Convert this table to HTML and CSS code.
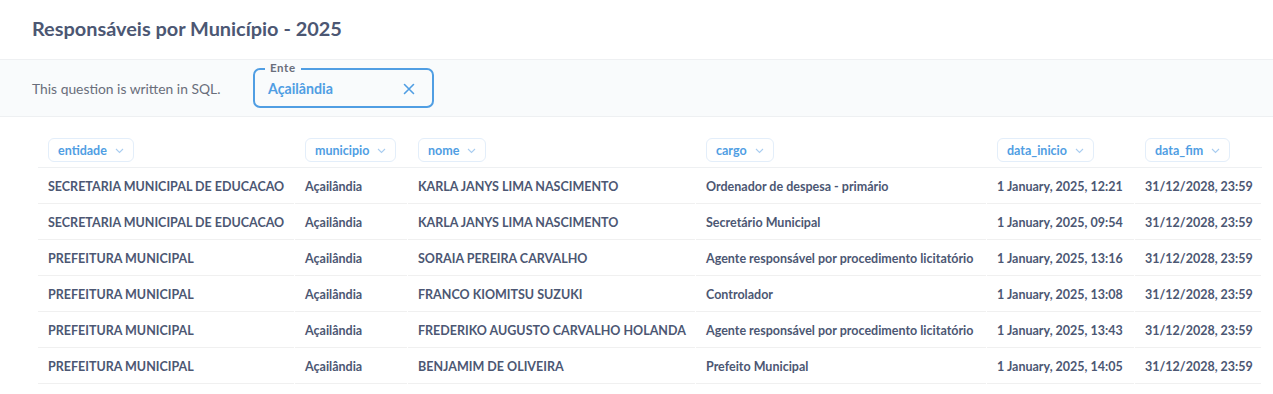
FILE: index.html
```html
<!DOCTYPE html>
<html lang="pt">
<head>
<meta charset="utf-8">
<link rel="stylesheet" href="styles.css">
</head>
<body>
<div class="page">
  <header class="title-bar">
    <h1 class="title">Responsáveis por Município - 2025</h1>
  </header>
  <div class="filter-bar">
    <span class="sql-note">This question is written in SQL.</span>
    <div class="param">
      <span class="param-label">Ente</span>
      <span class="param-value">Açailândia</span>
      <svg class="param-clear" width="12" height="12" viewBox="0 0 12 12"><path d="M1.5 1.5 L10.5 10.5 M10.5 1.5 L1.5 10.5" stroke="#509ee3" stroke-width="1.6" stroke-linecap="round" fill="none"/></svg>
    </div>
  </div>
  <div class="table">
    <div class="row head">
      <div class="cell"><span class="pill">entidade<svg class="chev" width="9" height="6" viewBox="0 0 9 6"><path d="M1 1 L4.5 4.5 L8 1" stroke="#a9cdf0" stroke-width="1.1" fill="none"/></svg></span></div>
      <div class="cell"><span class="pill">municipio<svg class="chev" width="9" height="6" viewBox="0 0 9 6"><path d="M1 1 L4.5 4.5 L8 1" stroke="#a9cdf0" stroke-width="1.1" fill="none"/></svg></span></div>
      <div class="cell"><span class="pill">nome<svg class="chev" width="9" height="6" viewBox="0 0 9 6"><path d="M1 1 L4.5 4.5 L8 1" stroke="#a9cdf0" stroke-width="1.1" fill="none"/></svg></span></div>
      <div class="cell"><span class="pill">cargo<svg class="chev" width="9" height="6" viewBox="0 0 9 6"><path d="M1 1 L4.5 4.5 L8 1" stroke="#a9cdf0" stroke-width="1.1" fill="none"/></svg></span></div>
      <div class="cell"><span class="pill">data_inicio<svg class="chev" width="9" height="6" viewBox="0 0 9 6"><path d="M1 1 L4.5 4.5 L8 1" stroke="#a9cdf0" stroke-width="1.1" fill="none"/></svg></span></div>
      <div class="cell"><span class="pill">data_fim<svg class="chev" width="9" height="6" viewBox="0 0 9 6"><path d="M1 1 L4.5 4.5 L8 1" stroke="#a9cdf0" stroke-width="1.1" fill="none"/></svg></span></div>
    </div>
    <div class="row">
      <div class="cell">SECRETARIA MUNICIPAL DE EDUCACAO</div>
      <div class="cell">Açailândia</div>
      <div class="cell">KARLA JANYS LIMA NASCIMENTO</div>
      <div class="cell">Ordenador de despesa - primário</div>
      <div class="cell">1 January, 2025, 12:21</div>
      <div class="cell">31/12/2028, 23:59</div>
    </div>
    <div class="row">
      <div class="cell">SECRETARIA MUNICIPAL DE EDUCACAO</div>
      <div class="cell">Açailândia</div>
      <div class="cell">KARLA JANYS LIMA NASCIMENTO</div>
      <div class="cell">Secretário Municipal</div>
      <div class="cell">1 January, 2025, 09:54</div>
      <div class="cell">31/12/2028, 23:59</div>
    </div>
    <div class="row">
      <div class="cell">PREFEITURA MUNICIPAL</div>
      <div class="cell">Açailândia</div>
      <div class="cell">SORAIA PEREIRA CARVALHO</div>
      <div class="cell">Agente responsável por procedimento licitatório</div>
      <div class="cell">1 January, 2025, 13:16</div>
      <div class="cell">31/12/2028, 23:59</div>
    </div>
    <div class="row">
      <div class="cell">PREFEITURA MUNICIPAL</div>
      <div class="cell">Açailândia</div>
      <div class="cell">FRANCO KIOMITSU SUZUKI</div>
      <div class="cell">Controlador</div>
      <div class="cell">1 January, 2025, 13:08</div>
      <div class="cell">31/12/2028, 23:59</div>
    </div>
    <div class="row">
      <div class="cell">PREFEITURA MUNICIPAL</div>
      <div class="cell">Açailândia</div>
      <div class="cell">FREDERIKO AUGUSTO CARVALHO HOLANDA</div>
      <div class="cell">Agente responsável por procedimento licitatório</div>
      <div class="cell">1 January, 2025, 13:43</div>
      <div class="cell">31/12/2028, 23:59</div>
    </div>
    <div class="row">
      <div class="cell">PREFEITURA MUNICIPAL</div>
      <div class="cell">Açailândia</div>
      <div class="cell">BENJAMIM DE OLIVEIRA</div>
      <div class="cell">Prefeito Municipal</div>
      <div class="cell">1 January, 2025, 14:05</div>
      <div class="cell">31/12/2028, 23:59</div>
    </div>
  </div>
</div>
</body>
</html>
```
FILE: styles.css
```css
* { box-sizing: border-box; }
html, body { margin: 0; padding: 0; background: #fff; }
body { font-family: Lato, "Noto Sans", sans-serif; color: #4c5773; }

.page { width: 1273px; height: 394px; overflow: hidden; }

.title-bar { height: 59px; padding: 16px 32px 0; }
.title { margin: 0; font-size: 19.9px; font-weight: 700; line-height: 24px; color: #4c5773; }

.filter-bar {
  height: 58px;
  background: #f9fbfc;
  border-top: 1px solid #eef0f2;
  border-bottom: 1px solid #eef0f2;
  display: flex;
  align-items: center;
  padding: 0 32px;
}
.sql-note { font-size: 13.85px; color: #696e7b; width: 221px; padding-top: 1px; }
.param {
  position: relative;
  width: 181px;
  height: 40px;
  border: 2px solid #509ee3;
  border-radius: 7px;
  display: flex;
  align-items: center;
  justify-content: space-between;
  padding: 1px 17px 0 13px;
}
.param-label {
  position: absolute;
  top: -9px;
  left: 10px;
  padding: 0 5px;
  background: #f9fbfc;
  font-size: 11.5px;
  font-weight: 700;
  line-height: 14px;
  color: #696e7b;
  letter-spacing: 0.6px;
}
.param-value { font-size: 14.2px; font-weight: 700; color: #509ee3; }
.param-clear { display: block; }

.table { padding: 21px 0 0 38px; }
.row {
  display: grid;
  grid-template-columns: 257px 113px 288px 291px 148px 127px;
  height: 36px;
  align-items: center;
}
.row.head { height: 30px; align-items: start; }
.cell {
  height: 100%;
  display: flex;
  align-items: center;
  padding: 2px 0 0 10px;
  font-size: 12.5px;
  font-weight: 700;
  color: #4c5773;
  white-space: nowrap;
  border-bottom: 1px solid #f0f0f0;
  margin-right: 1px;
}
.row.head .cell { align-items: flex-start; padding-top: 0; border-bottom: 1px solid #eef0f2; margin-right: 0; }
.pill {
  display: inline-flex;
  align-items: center;
  height: 24px;
  padding: 0 9px;
  border: 1px solid #e3eefa;
  border-radius: 6px;
  font-size: 12.5px;
  font-weight: 700;
  color: #509ee3;
  background: #fff;
}
.chev { margin-left: 8px; margin-top: 1px; }
```
